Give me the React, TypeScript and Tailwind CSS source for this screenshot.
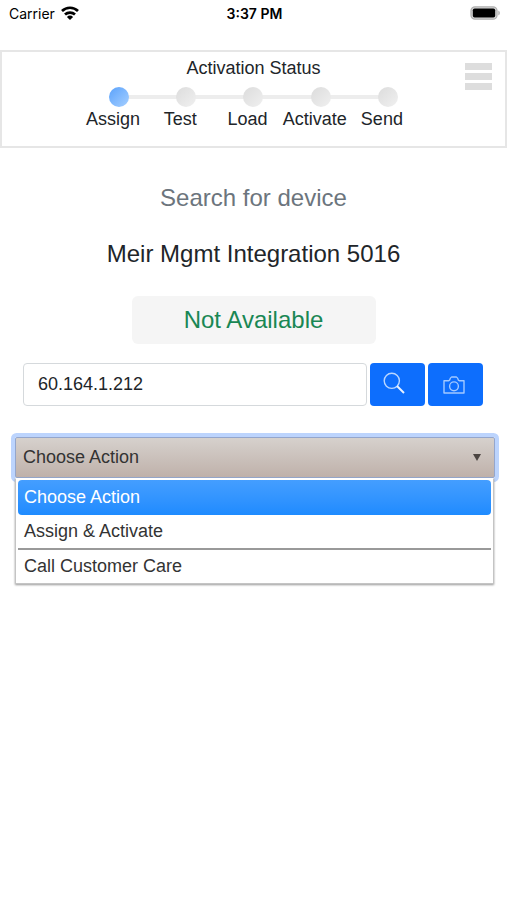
import { useState } from "react";

const steps = ["Assign", "Test", "Load", "Activate", "Send"];

const actions = ["Choose Action", "Assign & Activate", "Call Customer Care"];

export default function App() {
  const [action, setAction] = useState(actions[0]);
  const [ip, setIp] = useState("60.164.1.212");
  const [menuOpen, setMenuOpen] = useState(true);

  const choose = (name: string) => {
    setAction(name);
    setMenuOpen(false);
  };

  return (
    <div className="min-h-screen bg-white font-['Liberation_Sans',Arial,sans-serif] text-[#212529]">
      <StatusBar />
      <StepHeader current={0} />

      <main className="text-center">
        <h1 className="mt-8 text-[24px] leading-9 text-[#6c757d]">
          Search for device
        </h1>
        <h2 className="mt-5 text-[24px] leading-9">
          Meir Mgmt Integration 5016
        </h2>
        <p className="mx-auto mt-6 w-[244px] rounded-md bg-[#f5f5f5] text-[24px] leading-12 text-[#198754]">
          Not Available
        </p>

        <form
          className="mt-[19px] flex items-center gap-[3px] pr-6 pl-[23px]"
          onSubmit={(e) => e.preventDefault()}
        >
          <input
            type="text"
            aria-label="Device address"
            value={ip}
            onChange={(e) => setIp(e.target.value)}
            className="h-[43px] min-w-0 flex-1 rounded border border-[#d5d9dc] px-[14px] text-[18px] outline-none"
          />
          <button
            type="submit"
            aria-label="Search"
            className="flex h-[43px] w-[55px] items-center justify-center rounded bg-[#0d6efd] pr-2 pb-1 text-[#b9d6ff]"
          >
            <SearchIcon />
          </button>
          <button
            type="button"
            aria-label="Scan"
            className="flex h-[43px] w-[55px] items-center justify-center rounded bg-[#0d6efd] pr-1 text-[#a3c9ff]"
          >
            <CameraIcon />
          </button>
        </form>

        <div className="relative mt-[31px] mr-3 ml-[15px] text-left text-[18px] text-[#333333]">
          <select
            aria-label="Action"
            value={action}
            onChange={(e) => setAction(e.target.value)}
            className="block h-[41px] w-full appearance-none rounded-xs border border-[#94a6cc] bg-linear-to-b from-[#d6d1cd] to-[#bfb1aa] px-[7px] shadow-[0_0_0_4px_#bcd4fd] outline-none"
          >
            {actions.map((name) => (
              <option key={name}>{name}</option>
            ))}
          </select>
          <svg
            viewBox="0 0 8 7"
            className="pointer-events-none absolute top-[17px] right-[14px] h-[7px] w-2 fill-[#4c4542]"
          >
            <path d="M0 0h8L4 7z" />
          </svg>

          {menuOpen && (
            <ul
              role="listbox"
              aria-label="Actions"
              className="absolute top-full right-px left-0 border border-[#c4c4c4] border-t-white bg-white px-[2px] pt-px shadow-[0_1px_2px_#999999]"
            >
              {actions.map((name, i) => (
                <li
                  key={name}
                  role="option"
                  aria-selected={name === action}
                  className={i === 1 ? "border-b-2 border-[#999999]" : ""}
                >
                  <button
                    type="button"
                    onClick={() => choose(name)}
                    className={`block w-full px-[6px] text-left ${
                      i === 0 ? "h-[35px]" : "h-[33px]"
                    } ${
                      name === action
                        ? "rounded bg-linear-to-b from-[#449eff] to-[#1e8bff] text-white"
                        : ""
                    }`}
                  >
                    {name}
                  </button>
                </li>
              ))}
            </ul>
          )}
        </div>
      </main>
    </div>
  );
}

function StatusBar() {
  return (
    <div className="grid h-[50px] grid-cols-3 items-start pt-1 pr-[7px] pl-[9px] font-[Inter,sans-serif] text-[14px] leading-5 text-black">
      <span className="flex items-center gap-[6px]">
        Carrier
        <svg viewBox="0 0 18 14" className="mb-[2px] h-[14px] w-[18px]">
          <g fill="none" stroke="#000000" strokeWidth="2.7">
            <path d="M1 5a11.5 11.5 0 0 1 16 0" />
            <path d="M4 8.6a7.3 7.3 0 0 1 10 0" />
          </g>
          <path d="M9 14L5.9 10.9a4.4 4.4 0 0 1 6.2 0z" />
        </svg>
      </span>
      <span className="text-center font-semibold">3:37 PM</span>
      <svg
        viewBox="0 0 30 14"
        className="mt-[2px] h-[14px] w-[30px] justify-self-end"
      >
        <rect x="1" y="0.8" width="26" height="12.4" rx="4" fill="#d8d8d8" stroke="#b0b0b0" strokeWidth="1.3" />
        <rect x="2.8" y="2.4" width="22.4" height="9.2" rx="1.8" />
        <path d="M28.3 4.6a2.6 2.6 0 0 1 0 4.8z" fill="#b0b0b0" />
      </svg>
    </div>
  );
}

function StepHeader({ current }: { current: number }) {
  return (
    <header className="relative h-[98px] border-2 border-[#e6e6e6] pt-1 text-center text-[18px] leading-6">
      <p>Activation Status</p>
      {/* track and dots */}
      <div className="relative mx-auto mt-[7px] grid w-[336px] grid-cols-5">
        <div className="absolute top-2 right-[34px] left-[34px] h-1 bg-[#ededed]" />
        {steps.map((step, i) => (
          <span
            key={step}
            className={`relative mx-auto size-5 rounded-full bg-linear-to-br ${
              i === current
                ? "from-[#5aa2fb] to-[#a5cfff]"
                : "from-[#dcdcdc] to-[#f0f0f0]"
            }`}
          />
        ))}
      </div>
      <div className="pr-3">
        <ol className="mx-auto grid w-[336px] grid-cols-5">
          {steps.map((step) => (
            <li key={step}>{step}</li>
          ))}
        </ol>
      </div>
      <button
        type="button"
        aria-label="Menu"
        className="absolute top-[11px] right-[13px] flex w-[27px] flex-col gap-[3px]"
      >
        <span className="h-[7px] bg-[#dddddd]" />
        <span className="h-[7px] bg-[#dddddd]" />
        <span className="h-[7px] bg-[#dddddd]" />
      </button>
    </header>
  );
}

function SearchIcon() {
  return (
    <svg viewBox="0 0 22 22" className="size-[22px]" fill="none" stroke="currentColor">
      <circle cx="8.8" cy="8.8" r="7.6" strokeWidth="1.4" />
      <path d="M14 14l7 7" stroke="#e8f1ff" strokeWidth="2" />
    </svg>
  );
}

function CameraIcon() {
  return (
    <svg
      viewBox="0 0 22 18"
      className="h-[18px] w-[22px]"
      fill="none"
      stroke="currentColor"
      strokeWidth="1.4"
      strokeLinejoin="round"
    >
      <path d="M1 4.8h4.6Q6.8 4.6 7 3.2T8.6 1h4.8Q14.8 1.8 15 3.2t1.4 1.6H21V17H1z" />
      <circle cx="11" cy="10.3" r="4.4" />
    </svg>
  );
}
